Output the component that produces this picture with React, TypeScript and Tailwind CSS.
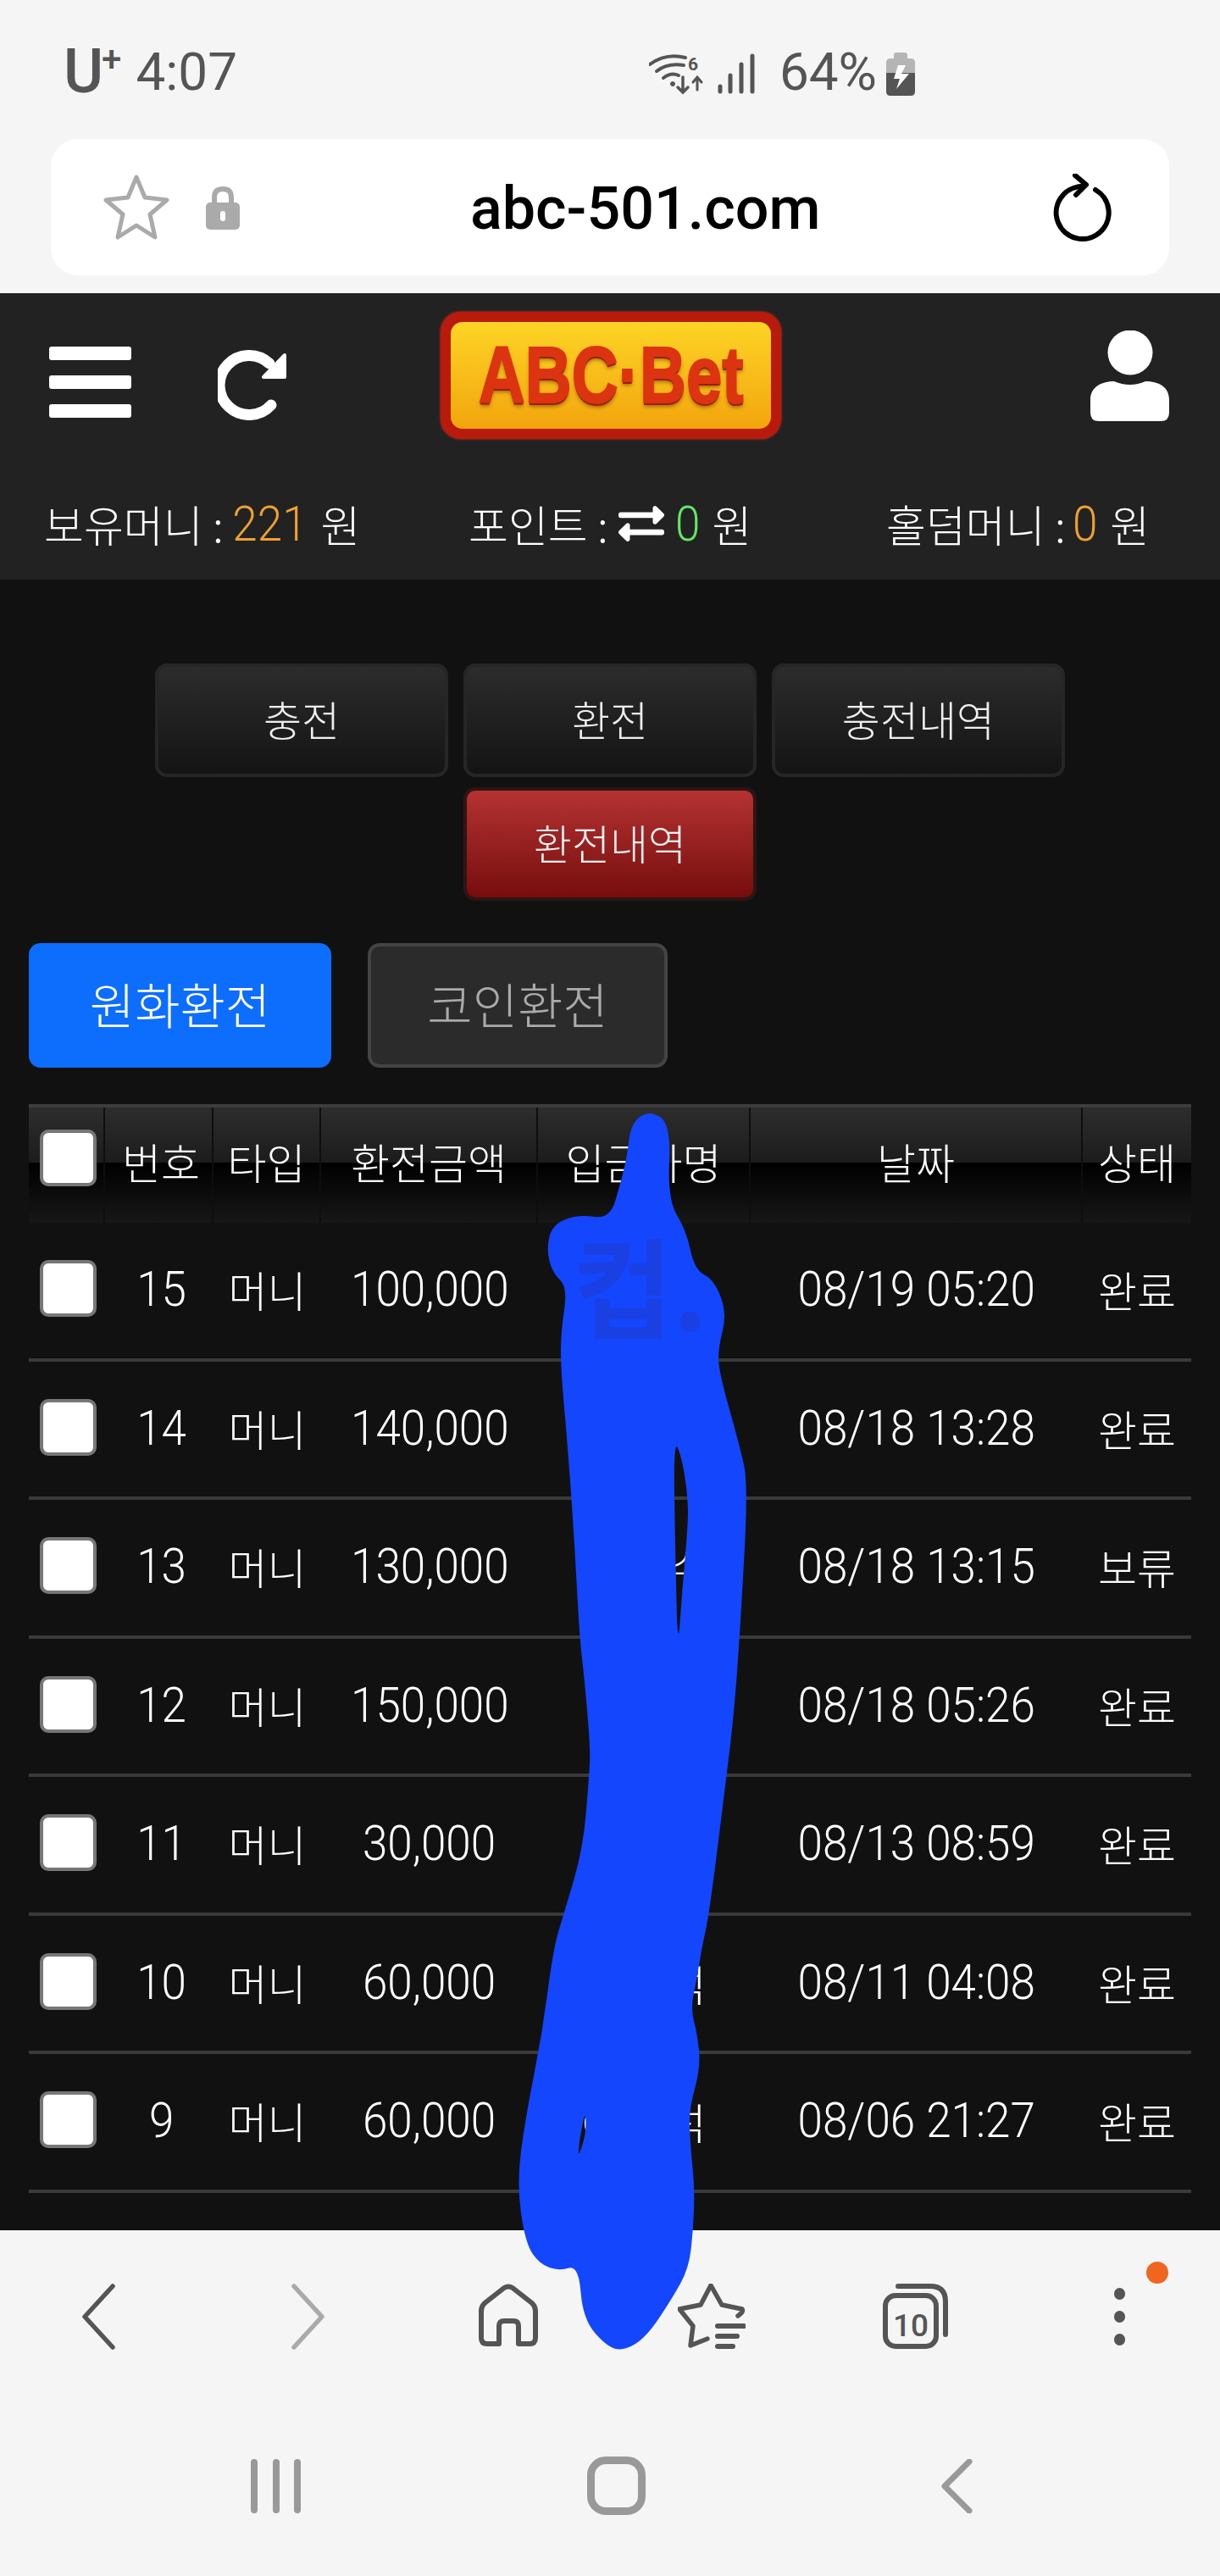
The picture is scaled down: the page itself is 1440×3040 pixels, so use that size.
import { FaExchangeAlt } from "react-icons/fa";

const kr = "font-['Noto_Sans_CJK_KR',sans-serif]";

const rows = [
  { no: "15", amount: "100,000", name: "", date: "08/19 05:20", status: "완료" },
  { no: "14", amount: "140,000", name: "", date: "08/18 13:28", status: "완료" },
  { no: "13", amount: "130,000", name: "○○수", date: "08/18 13:15", status: "보류" },
  { no: "12", amount: "150,000", name: "", date: "08/18 05:26", status: "완료" },
  { no: "11", amount: "30,000", name: "", date: "08/13 08:59", status: "완료" },
  { no: "10", amount: "60,000", name: "○○석", date: "08/11 04:08", status: "완료" },
  { no: "9", amount: "60,000", name: "○○석", date: "08/06 21:27", status: "완료" },
  { no: "8", amount: "", name: "", date: "", status: "" },
];

const headers = ["번호", "타입", "환전금액", "입금자명", "날짜", "상태"];
const colWidths = ["w-[128px] pl-[6px]", "w-[127px]", "w-[256px]", "w-[251px]", "w-[392px]", "w-[128px]"];

// marker scribble over the name column, traced from the screenshot
const outline: [number, number][] = [
  [767, 1310], [745, 1325], [740, 1365], [733, 1394], [720, 1439], [683, 1433], [652, 1445], [645, 1474], [652, 1502],
  [670, 1519], [662, 1572], [662, 1617], [670, 1706], [678, 1818], [684, 1932], [690, 1983], [697, 2065], [695, 2100],
  [688, 2183], [665, 2260], [653, 2300], [640, 2400], [620, 2500], [610, 2577], [620, 2647], [637, 2672], [660, 2680],
  [683, 2673], [688, 2737], [717, 2770], [737, 2774], [763, 2758], [793, 2713], [813, 2677], [818, 2633], [820, 2583],
  [815, 2533], [813, 2490], [827, 2440], [823, 2400], [815, 2370], [823, 2333], [828, 2300], [837, 2260], [857, 2100],
  [867, 2017], [875, 1900], [883, 1751], [873, 1706], [848, 1617], [848, 1590], [858, 1550], [843, 1510], [820, 1499],
  [810, 1452], [788, 1416], [792, 1327],
];
const gapOne: [number, number][] = [[795, 1695], [806, 1725], [812, 1770], [812, 1800], [805, 1880], [800, 1950], [797, 1830]];
const gapTwo: [number, number][] = [[691, 2490], [692, 2517], [682, 2548], [684, 2525]];

const smooth = (pts: [number, number][]) => {
  const mid = (a: [number, number], b: [number, number]) => `${(a[0] + b[0]) / 2} ${(a[1] + b[1]) / 2}`;
  let d = `M${mid(pts[pts.length - 1], pts[0])}`;
  pts.forEach((p, i) => {
    d += ` Q${p[0]} ${p[1]} ${mid(p, pts[(i + 1) % pts.length])}`;
  });
  return d + " Z";
};

// the site's digits are tall and narrow, so squeeze Roboto Light sideways
const Num = ({ children, className = "" }: { children: React.ReactNode; className?: string }) => (
  <span className={`inline-block scale-x-[0.93] font-['Roboto',sans-serif] font-light text-[57px] leading-none ${className}`}>
    {children}
  </span>
);

const Check = ({ className = "" }: { className?: string }) => (
  <input
    type="checkbox"
    className={`w-[67px] h-[67px] appearance-none bg-white border-4 border-[#777] rounded-[10px] ${className}`}
  />
);

const StatusBar = () => (
  <div className="h-[164px] flex items-start justify-between pl-[75px] pr-[360px] pt-[58px] text-[#555] font-['Roboto',sans-serif]">
    <div className="flex items-start">
      <span className="text-[72px] leading-[54px] font-medium">U</span>
      <span className="text-[42px] leading-[24px] font-medium -ml-[2px]">+</span>
      <span className="text-[62px] leading-[54px] ml-[17px]">4:07</span>
    </div>
    <div className="flex items-start">
      <svg width="65" height="49" viewBox="0 0 65 49" fill="none" stroke="#555" strokeLinecap="round" className="mt-[5px]">
        <path d="M1 13 Q20 -1 43 5" strokeWidth="4" />
        <path d="M9 21 Q22 11 41 14" strokeWidth="4" />
        <path d="M17 29 Q26 22 35 26" strokeWidth="4" />
        <circle cx="28" cy="36" r="2.5" fill="#555" strokeWidth="1" />
        <path d="M40 28 V46 M34 40 L40 46 L46 40" strokeWidth="3.5" />
        <path d="M57 43 V29 M52 34 L57 28 L62 34" strokeWidth="3" />
        <text x="46" y="20" fontSize="21" fontWeight="700" fill="#555" stroke="none" fontFamily="Roboto">6</text>
      </svg>
      <svg width="46" height="48" viewBox="0 0 46 48" fill="none" stroke="#555" strokeWidth="5" strokeLinecap="round" className="ml-[16px] mt-[5px]">
        <path d="M3 39 V45 M15 26 V45 M28 13 V45 M41 3 V45" />
      </svg>
      <span className="text-[62px] leading-[54px] ml-[27px]">64%</span>
      <svg width="34" height="51" viewBox="0 0 34 51" className="ml-[11px] mt-[4px]">
        <path d="M9 7 V3 Q9 0 12 0 H22 Q25 0 25 3 V7 H29 Q34 7 34 12 V24 H0 V12 Q0 7 5 7 Z" fill="#b5b5b5" />
        <path d="M0 24 H34 V46 Q34 51 29 51 H5 Q0 51 0 46 Z" fill="#555" />
        <path d="M14 15 H23 L18 25 H27 L12 43 L16 31 H9 Z" fill="#fff" />
      </svg>
    </div>
  </div>
);

const UrlBar = () => (
  <div className="mx-[60px] h-[161px] bg-white rounded-[32px] flex items-center pl-[61px] pr-[67px]">
    <svg width="80" height="80" viewBox="0 0 80 80" fill="none" stroke="#aaa" strokeWidth="5" strokeLinejoin="round">
      <path d="M40 4 L50 28 L76 31 L56 48 L62 75 L40 61 L18 75 L24 48 L4 31 L30 28 Z" />
    </svg>
    <svg width="40" height="52" viewBox="0 0 40 52" className="ml-[42px]">
      <path d="M10 22 V14 Q10 4 20 4 Q30 4 30 14 V22" fill="none" stroke="#aaa" strokeWidth="6" />
      <rect x="0" y="20" width="40" height="32" rx="5" fill="#aaa" />
      <rect x="17" y="30" width="6" height="12" rx="3" fill="#fff" />
    </svg>
    <span className="ml-[272px] mt-[2px] text-[70px] leading-none font-medium text-black font-['Roboto',sans-serif]">abc-501.com</span>
    <svg width="70" height="80" viewBox="0 0 70 80" fill="none" stroke="#000" strokeWidth="6" strokeLinecap="round" strokeLinejoin="round" className="ml-auto">
      <path d="M33 15 A31 31 0 1 0 50 19" />
      <path d="M26 2 L39 13 L27 25" />
    </svg>
  </div>
);

const Logo = () => (
  <div className="w-[402px] h-[150px] rounded-[24px] border-[10px] border-[#b81a0c] bg-[#b81a0c] shadow-[0_0_3px_#e0301a] p-[2px]">
    <div className="w-full h-full rounded-[14px] bg-gradient-to-b from-[#fdd425] to-[#f2a50c] flex items-center justify-center">
      <span className="inline-block scale-x-[0.81] font-['Liberation_Sans',sans-serif] font-bold text-[94px] leading-none text-[#dc3411] whitespace-nowrap [-webkit-text-stroke:2px_#dc3411] [text-shadow:0_3px_0_#96200a,0_5px_5px_rgba(120,60,0,0.6)]">
        ABC·Bet
      </span>
    </div>
  </div>
);

const SiteHeader = () => (
  <div className="h-[338px] bg-[#222222] text-white">
    <div className="h-[216px] pl-[58px] pr-[60px] flex items-start">
      <div className="w-[97px] mt-[63px] flex flex-col gap-[18px]">
        <div className="h-[16px] bg-white rounded-[3px]" />
        <div className="h-[16px] bg-white rounded-[3px]" />
        <div className="h-[16px] bg-white rounded-[3px]" />
      </div>
      <svg width="82" height="84" viewBox="0 0 82 84" className="ml-[102px] mt-[66px]">
        <path d="M61 17 A35 35 0 1 0 63 66" fill="none" stroke="#fff" strokeWidth="13" strokeLinecap="round" />
        <path d="M54 33 L79 33 L79 7 Z" fill="#fff" stroke="#fff" strokeWidth="4" strokeLinejoin="round" />
      </svg>
      <div className="ml-[181px] mt-[22px]">
        <Logo />
      </div>
      <svg width="93" height="107" viewBox="0 0 93 107" fill="#fff" className="ml-auto mt-[44px]">
        <circle cx="47" cy="26" r="26.5" />
        <path d="M0 82 C0 66 14 60 28 60 Q47 68 65 60 C80 60 93 66 93 82 V97 Q93 107 83 107 H10 Q0 107 0 97 Z" />
      </svg>
    </div>
    <div className={`${kr} pl-[52px] mt-[17px] flex items-center h-[78px] text-[51px] font-light`}>
      <div className="w-[501px] flex items-center">
        보유머니 : <Num className="text-[#f0a030] ml-[7px]">221</Num>
        <span className="ml-[13px]">원</span>
      </div>
      <div className="w-[493px] flex items-center">
        포인트 : <FaExchangeAlt className="w-[54px] h-[54px] ml-[12px] text-white" />
        <Num className="text-[#62e668] ml-[12px]">0</Num>
        <span className="ml-[13px]">원</span>
      </div>
      <div className="flex items-center">
        홀덤머니 : <Num className="text-[#f0a030] ml-[7px]">0</Num>
        <span className="ml-[14px]">원</span>
      </div>
    </div>
  </div>
);

const MenuButton = ({ label, active = false }: { label: string; active?: boolean }) => (
  <button
    className={`w-[346px] h-[134px] pb-[4px] rounded-[14px] border-4 flex items-center justify-center text-[49px] font-light text-[#eeeeee] ${
      active
        ? "border-[#2f1414] bg-gradient-to-b from-[#b53232] to-[#770d0d]"
        : "border-[#262626] bg-gradient-to-b from-[#2c2c2c] to-[#141414]"
    }`}
  >
    {label}
  </button>
);

const ExchangeTable = () => (
  <div className={`${kr} mt-[43px] mx-[34px] w-[1372px] text-white font-light`}>
    <div className="h-[140px] flex border-t-4 border-[#3d3d3d] bg-[linear-gradient(to_bottom,#2d2d2d_0%,#1c1c1c_48%,#000000_48%,#171717_100%)]">
      <div className="w-[90px] pl-[13px] flex items-center border-r-2 border-[#0e0e0e]">
        <Check className="-mt-[18px]" />
      </div>
      {headers.map((h, i) => (
        <div
          key={h}
          className={`${colWidths[i]} pb-[10px] flex items-center justify-center text-[50px] ${i < 5 ? "border-r-2 border-[#0e0e0e]" : ""}`}
        >
          {h}
        </div>
      ))}
    </div>
    {rows.map((r) => (
      <div key={r.no} className="h-[163.5px] shrink-0 flex items-center border-b-4 border-[#3a3a3a] text-[50px]">
        <div className="w-[90px] pl-[13px] flex">
          <Check className="-mt-[4px]" />
        </div>
        {r.amount && (
          <>
            <div className="w-[128px] pl-[6px] pb-[2px] flex justify-center">
              <Num>{r.no}</Num>
            </div>
            <div className="w-[127px] pb-[2px] text-center">머니</div>
            <div className="w-[256px] pb-[2px] flex justify-center">
              <Num>{r.amount}</Num>
            </div>
            <div className="w-[251px] text-center">{r.name}</div>
            <div className="w-[392px] pb-[2px] flex justify-center">
              <Num>{r.date}</Num>
            </div>
            <div className="w-[128px] pb-[2px] text-center">{r.status}</div>
          </>
        )}
      </div>
    ))}
  </div>
);

const BottomBars = () => (
  <div className="h-[408px] shrink-0 bg-[#f5f5f5]">
    <div className="flex items-start pt-[63px] pl-[96px]">
      <svg width="40" height="78" viewBox="0 0 40 78" fill="none" stroke="#555" strokeWidth="5.5" strokeLinecap="round" strokeLinejoin="round">
        <path d="M37 3 L4 39 L37 75" />
      </svg>
      <svg width="40" height="78" viewBox="0 0 40 78" fill="none" stroke="#aaa" strokeWidth="5.5" strokeLinecap="round" strokeLinejoin="round" className="ml-[208px]">
        <path d="M3 3 L36 39 L3 75" />
      </svg>
      <svg width="70" height="74" viewBox="0 0 70 74" fill="none" stroke="#555" strokeWidth="6" strokeLinejoin="round" className="ml-[181px]">
        <path d="M24 71 V50 Q24 44 30 44 H41 Q47 44 47 50 V71 H60 Q67 71 67 64 V32 Q67 27 63 23 L40 5 Q35 2 30 5 L7 23 Q3 27 3 32 V64 Q3 71 10 71 Z" />
      </svg>
      <svg width="80" height="78" viewBox="0 0 80 78" fill="none" stroke="#555" strokeWidth="5.5" strokeLinecap="round" strokeLinejoin="round" className="ml-[165px]">
        <path d="M71 38 Q78 33 76 30 L52 25 L39 2 L27 25 L2 30 L18 50 L15 73 L35 65" />
        <path d="M47 50 H78 M47 62 H70 M47 74 H65" strokeWidth="6" />
      </svg>
      <svg width="78" height="77" viewBox="0 0 78 77" fill="none" stroke="#555" strokeWidth="6" strokeLinecap="round" className="ml-[162px]">
        <rect x="3" y="14" width="60" height="60" rx="12" />
        <path d="M18 3 H56 Q74 3 74 21 V60" />
        <text x="33" y="62" textAnchor="middle" fontSize="37" fontWeight="500" fill="#555" stroke="none" fontFamily="Roboto">10</text>
      </svg>
      <div className="relative ml-[195px] w-[13px] h-[78px] flex flex-col justify-between pt-[5px] pb-[5px]">
        <div className="w-[13px] h-[14px] rounded-full bg-[#555]" />
        <div className="w-[13px] h-[14px] rounded-full bg-[#555]" />
        <div className="w-[13px] h-[14px] rounded-full bg-[#555]" />
        <div className="absolute left-[38px] -top-[26px] w-[26px] h-[26px] rounded-full bg-[#f0651f]" />
      </div>
    </div>
    <div className="flex items-center pl-[296px] mt-[126px]">
      <div className="w-[59px] h-[64px] flex justify-between">
        <div className="w-[8px] bg-[#999] rounded-full" />
        <div className="w-[8px] bg-[#999] rounded-full" />
        <div className="w-[8px] bg-[#999] rounded-full" />
      </div>
      <div className="ml-[338px] w-[69px] h-[69px] rounded-[22px] border-[9px] border-[#999]" />
      <svg width="37" height="64" viewBox="0 0 37 64" fill="none" stroke="#999" strokeWidth="7" strokeLinecap="round" strokeLinejoin="round" className="ml-[349px]">
        <path d="M33 3 L4 32 L33 61" />
      </svg>
    </div>
  </div>
);

const App = () => {
  return (
    <div className={`${kr} relative w-[1440px] h-[3040px] overflow-hidden flex flex-col bg-[#f5f5f5]`}>
      <div className="h-[346px] shrink-0">
        <StatusBar />
        <UrlBar />
      </div>
      <SiteHeader />
      <main className="flex-1 min-h-0 overflow-hidden bg-[#111111] pt-[99px]">
        <div className="w-[1080px] mx-auto flex flex-wrap justify-center gap-x-[18px] gap-y-[12px]">
          <MenuButton label="충전" />
          <MenuButton label="환전" />
          <MenuButton label="충전내역" />
          <MenuButton label="환전내역" active />
        </div>
        <div className="mt-[50px] ml-[34px] flex gap-[43px]">
          <button className="w-[357px] h-[147px] pb-[4px] rounded-[14px] bg-[#0d6efd] text-[58px] font-light text-white">원화환전</button>
          <button className="w-[354px] h-[147px] pb-[4px] rounded-[14px] bg-[#2b2b2b] border-4 border-[#444] text-[58px] font-light text-[#aaaaaa]">코인환전</button>
        </div>
        <ExchangeTable />
      </main>
      <BottomBars />

      {/* marker drawn on top of the screenshot */}
      <svg width="1440" height="3040" viewBox="0 0 1440 3040" className="absolute left-0 top-0 pointer-events-none">
        <path d={`${smooth(outline)} ${smooth(gapOne)} ${smooth(gapTwo)}`} fill="#1446fd" fillRule="evenodd" />
      </svg>
      <span className="absolute left-[676px] top-[1440px] text-[128px] leading-[150px] font-bold text-[#1a3fe2]">컵.</span>
    </div>
  );
};

export default App;
